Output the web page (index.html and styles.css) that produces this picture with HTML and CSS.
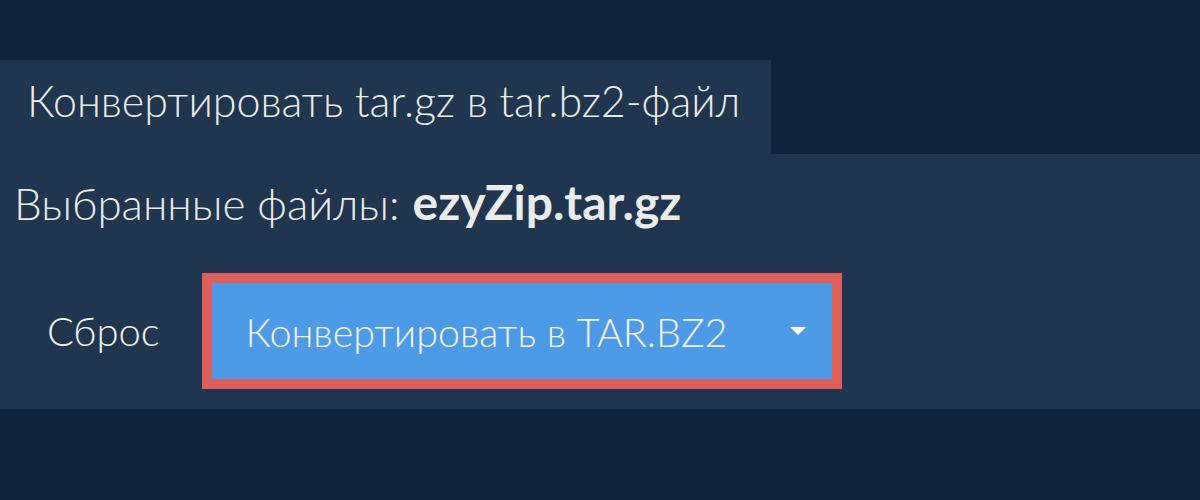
FILE: index.html
```html
<!DOCTYPE html>
<html lang="ru">
<head>
    <meta charset="UTF-8">
    <meta name="viewport" content="width=device-width, initial-scale=1.0">
    <title>Конвертировать tar.gz в tar.bz2</title>
    <link rel="stylesheet" href="styles.css">
</head>
<body>
    <div class="page">
        <div class="tab">Конвертировать tar.gz в tar.bz2-файл</div>

        <div class="panel">
            <div class="selected">
                <span class="selected-label">Выбранные файлы:</span> <b class="filename">ezyZip.tar.gz</b>
            </div>

            <div class="actions">
                <button class="reset">Сброс</button>
                <button class="convert">
                    <span class="label">Конвертировать в TAR.BZ2</span>
                    <span class="caret"></span>
                </button>
            </div>
        </div>
    </div>
</body>
</html>
```

FILE: styles.css
```css
body {
    margin: 0;
    background: #0f243a;
    color: #ebebeb;
    font-family: Lato, "Liberation Sans", sans-serif;
    font-weight: 300;
}
.page {
    padding-top: 60px;
}
.tab {
    width: 744px;
    height: 94px;
    padding-left: 27px;
    background: #20354e;
    font-size: 43px;
    line-height: 81px;
    white-space: nowrap;
}
.panel {
    height: 255px;
    background: #20354e;
}
.selected {
    padding: 16px 0 0 14px;
    height: 101px;
    box-sizing: border-box;
    font-size: 48px;
    line-height: 64px;
    white-space: nowrap;
}
.selected-label {
    font-size: 44px;
}
.filename {
    font-weight: 700;
}
.actions {
    display: flex;
    align-items: center;
    gap: 42px;
    padding-left: 47px;
    padding-top: 18px;
}
button {
    font-family: inherit;
    color: #f4f4f4;
    border: none;
    background: none;
    padding: 0;
    cursor: pointer;
}
.reset {
    font-size: 40px;
    font-weight: 300;
}
.convert {
    display: flex;
    align-items: center;
    width: 640px;
    height: 116px;
    padding: 0 26px 0 34px;
    box-sizing: border-box;
    background: #4d9be6;
    border: 10px solid #dc5f5c;
    font-size: 39.5px;
    font-weight: 300;
}
.label {
    flex: 1;
    text-align: left;
}
.caret {
    width: 0;
    height: 0;
    border-left: 8px solid transparent;
    border-right: 8px solid transparent;
    border-top: 8px solid #ffffff;
}
```
